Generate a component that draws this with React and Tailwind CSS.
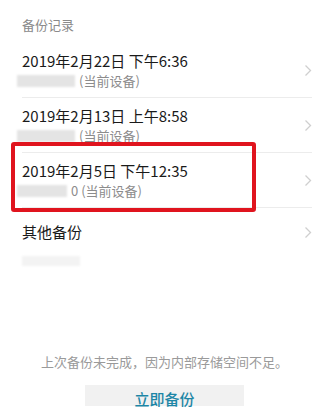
import React from "react";

const records = [
  { time: "2019年2月22日 下午6:36", mask: "w-[58px]", tail: "" },
  { time: "2019年2月13日 上午8:58", mask: "w-[58px]", tail: "" },
  { time: "2019年2月5日 下午12:35", mask: "w-[50px]", tail: "0 ", marked: true },
];

const Chevron = () => (
  <svg width="8" height="13" viewBox="0 0 8 13" className="shrink-0">
    <path d="M1.5 1.5 L6.5 6.5 L1.5 11.5" fill="none" stroke="#cfcfcf" strokeWidth="1.3" />
  </svg>
);

const App = () => {
  return (
    <div
      className="w-[329px] h-[414px] overflow-hidden bg-white flex flex-col"
      style={{ fontFamily: '"Noto Sans CJK SC", "Noto Sans", sans-serif' }}
    >
      <div className="pl-[22px] pt-[16px] pb-[10px] text-[13px] leading-[17px] text-[#8a8a8a]">
        备份记录
      </div>

      <div className="ml-[22px] mr-[17px]">
        {records.map((r, i) => (
          <div
            key={i}
            className="relative flex items-center justify-between h-[55px] border-b border-[#ececec]"
          >
            <div className="flex flex-col">
              <span className="text-[15px] leading-[20px] text-[#1a1a1a]">{r.time}</span>
              <div className="flex items-center mt-[1px] -ml-[5px]">
                <span className={`${r.mask} h-[12px] bg-[#e4e4e4] blur-[1px]`} />
                <span className="text-[13px] leading-[17px] text-[#8c8c8c] ml-[4px]">
                  {r.tail}(当前设备)
                </span>
              </div>
            </div>
            <Chevron />
            {r.marked && (
              <div className="absolute -left-[11px] -top-[11px] w-[245px] h-[70px] border-[4px] border-[#e0141e] rounded-[3px]" />
            )}
          </div>
        ))}
        <div className="flex items-center justify-between h-[48px]">
          <span className="text-[15px] leading-[20px] text-[#1a1a1a]">其他备份</span>
          <Chevron />
        </div>
        <div className="w-[58px] h-[10px] bg-[#f3f3f3] blur-[1px]" />
      </div>

      <div className="mt-[87px] text-center text-[13px] leading-[17px] text-[#9a9a9a]">
        上次备份未完成，因为内部存储空间不足。
      </div>

      <div className="mt-[15px] mx-auto w-[159px] h-[21px] bg-[#f1f1f1] flex justify-center">
        <span className="text-[15px] leading-[20px] mt-[4px] font-medium text-[#1d86a6]">立即备份</span>
      </div>
    </div>
  );
};

export default App;
